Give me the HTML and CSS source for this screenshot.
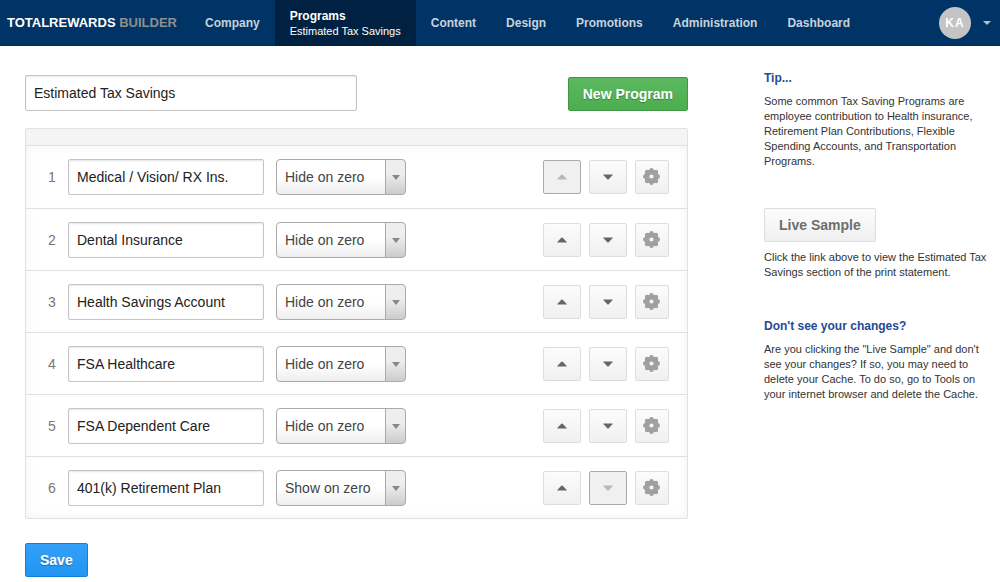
FILE: index.html
```html
<!DOCTYPE html>
<html lang="en">
<head>
<meta charset="utf-8">
<title>TotalRewards Builder - Programs</title>
<link rel="stylesheet" href="styles.css">
</head>
<body>
<svg class="sprite" aria-hidden="true">
  <symbol id="gear" viewBox="0 0 17 17">
    <circle class="ring" cx="8.5" cy="8.5" r="4.6"/>
    <circle cx="8.5" cy="2.2" r="2.2"/><circle cx="8.5" cy="14.8" r="2.2"/>
    <circle cx="2.2" cy="8.5" r="2.2"/><circle cx="14.8" cy="8.5" r="2.2"/>
    <circle cx="4" cy="4" r="2.2"/><circle cx="13" cy="4" r="2.2"/>
    <circle cx="4" cy="13" r="2.2"/><circle cx="13" cy="13" r="2.2"/>
  </symbol>
  <symbol id="up" viewBox="0 0 10 6"><path d="M0.3 5.6V5L4.3 0.8Q5 0.2 5.7 0.8L9.7 5V5.6Z"/></symbol>
  <symbol id="down" viewBox="0 0 10 6"><path d="M0.3 0.4V1L4.3 5.2Q5 5.8 5.7 5.2L9.7 1V0.4Z"/></symbol>
</svg>

<header class="topbar">
  <a class="brand" href="#">TOTALREWARDS <span class="brand-sub">BUILDER</span></a>
  <nav class="nav">
    <a href="#">Company</a>
    <a class="active" href="#">Programs<span class="nav-sub">Estimated Tax Savings</span></a>
    <a href="#">Content</a>
    <a href="#">Design</a>
    <a href="#">Promotions</a>
    <a href="#">Administration</a>
    <a href="#">Dashboard</a>
  </nav>
  <button class="account" type="button" aria-label="Account"><span class="avatar">KA</span><span class="caret"></span></button>
</header>

<div class="page">
  <main class="main">
    <div class="toolbar">
      <input class="text title" type="text" aria-label="Program group" value="Estimated Tax Savings">
      <button class="btn green" type="button">New Program</button>
    </div>

    <div class="panel">
      <div class="panel-head"></div>
      <ol class="rows">
        <li class="row">
          <span class="num">1</span>
          <input class="text name" type="text" aria-label="Program 1" value="Medical / Vision/ RX Ins.">
          <span class="select"><select aria-label="Display 1"><option selected>Hide on zero</option><option>Show on zero</option></select></span>
          <span class="actions">
            <button class="btn move" type="button" aria-label="Move up" disabled><svg><use href="#up"/></svg></button>
            <button class="btn move" type="button" aria-label="Move down"><svg><use href="#down"/></svg></button>
            <button class="btn gear" type="button" aria-label="Settings"><svg><use href="#gear"/></svg></button>
          </span>
        </li>
        <li class="row">
          <span class="num">2</span>
          <input class="text name" type="text" aria-label="Program 2" value="Dental Insurance">
          <span class="select"><select aria-label="Display 2"><option selected>Hide on zero</option><option>Show on zero</option></select></span>
          <span class="actions">
            <button class="btn move" type="button" aria-label="Move up"><svg><use href="#up"/></svg></button>
            <button class="btn move" type="button" aria-label="Move down"><svg><use href="#down"/></svg></button>
            <button class="btn gear" type="button" aria-label="Settings"><svg><use href="#gear"/></svg></button>
          </span>
        </li>
        <li class="row">
          <span class="num">3</span>
          <input class="text name" type="text" aria-label="Program 3" value="Health Savings Account">
          <span class="select"><select aria-label="Display 3"><option selected>Hide on zero</option><option>Show on zero</option></select></span>
          <span class="actions">
            <button class="btn move" type="button" aria-label="Move up"><svg><use href="#up"/></svg></button>
            <button class="btn move" type="button" aria-label="Move down"><svg><use href="#down"/></svg></button>
            <button class="btn gear" type="button" aria-label="Settings"><svg><use href="#gear"/></svg></button>
          </span>
        </li>
        <li class="row">
          <span class="num">4</span>
          <input class="text name" type="text" aria-label="Program 4" value="FSA Healthcare">
          <span class="select"><select aria-label="Display 4"><option selected>Hide on zero</option><option>Show on zero</option></select></span>
          <span class="actions">
            <button class="btn move" type="button" aria-label="Move up"><svg><use href="#up"/></svg></button>
            <button class="btn move" type="button" aria-label="Move down"><svg><use href="#down"/></svg></button>
            <button class="btn gear" type="button" aria-label="Settings"><svg><use href="#gear"/></svg></button>
          </span>
        </li>
        <li class="row">
          <span class="num">5</span>
          <input class="text name" type="text" aria-label="Program 5" value="FSA Dependent Care">
          <span class="select"><select aria-label="Display 5"><option selected>Hide on zero</option><option>Show on zero</option></select></span>
          <span class="actions">
            <button class="btn move" type="button" aria-label="Move up"><svg><use href="#up"/></svg></button>
            <button class="btn move" type="button" aria-label="Move down"><svg><use href="#down"/></svg></button>
            <button class="btn gear" type="button" aria-label="Settings"><svg><use href="#gear"/></svg></button>
          </span>
        </li>
        <li class="row">
          <span class="num">6</span>
          <input class="text name" type="text" aria-label="Program 6" value="401(k) Retirement Plan">
          <span class="select"><select aria-label="Display 6"><option>Hide on zero</option><option selected>Show on zero</option></select></span>
          <span class="actions">
            <button class="btn move" type="button" aria-label="Move up"><svg><use href="#up"/></svg></button>
            <button class="btn move" type="button" aria-label="Move down" disabled><svg><use href="#down"/></svg></button>
            <button class="btn gear" type="button" aria-label="Settings"><svg><use href="#gear"/></svg></button>
          </span>
        </li>
      </ol>
    </div>

    <button class="btn blue" type="button">Save</button>
  </main>

  <aside class="side">
    <section>
      <h2>Tip...</h2>
      <p>Some common Tax Saving Programs are employee contribution to Health insurance, Retirement Plan Contributions, Flexible Spending Accounts, and Transportation Programs.</p>
    </section>
    <section>
      <a class="btn" href="#">Live Sample</a>
      <p>Click the link above to view the Estimated Tax Savings section of the print statement.</p>
    </section>
    <section>
      <h2>Don't see your changes?</h2>
      <p>Are you clicking the "Live Sample" and don't see your changes? If so, you may need to delete your Cache. To do so, go to Tools on your internet browser and delete the Cache.</p>
    </section>
  </aside>
</div>
</body>
</html>
```
FILE: styles.css
```css
* { box-sizing: border-box; }

body {
  margin: 0;
  background: #fff;
  color: #333;
  font: 14px/20px "Liberation Sans", Arial, sans-serif;
}

a { text-decoration: none; }
.sprite { display: none; }

.topbar {
  display: flex;
  align-items: stretch;
  height: 46px;
  padding: 0 9px 0 7px;
  background: #036;
  border-bottom: 1px solid #002c59;
}

.brand {
  align-self: center;
  margin-right: 13px;
  color: #fff;
  font-size: 13px;
  font-weight: bold;
  white-space: nowrap;
}

.brand-sub { color: #8f8f8f; }

.nav { display: flex; }

.nav a {
  display: flex;
  flex-direction: column;
  justify-content: center;
  margin-bottom: -1px;
  padding: 0 15px;
  color: #c8d2dc;
  font-size: 12px;
  font-weight: bold;
  line-height: 15px;
  white-space: nowrap;
}

.nav .active { padding-top: 1px; background: #002142; color: #fff; }
.nav-sub { font-size: 11px; font-weight: normal; }

.account {
  display: flex;
  align-items: center;
  gap: 12px;
  margin-left: auto;
  padding: 0;
  border: 0;
  background: none;
  cursor: pointer;
}

.avatar {
  width: 32px;
  height: 32px;
  border-radius: 50%;
  background: #c4c4c4;
  color: #fff;
  font: bold 12px/32px "Liberation Sans", Arial, sans-serif;
  letter-spacing: 1px;
  text-align: center;
}

.caret {
  border: 4px solid transparent;
  border-top-color: #b3c2d1;
  border-bottom: 0;
}

.page {
  display: flex;
  justify-content: space-between;
  gap: 76px;
  padding: 25px 12px 5px 25px;
}

.main { flex: 1; padding-top: 4px; }
.side { flex: 0 0 224px; }

.toolbar {
  display: flex;
  justify-content: space-between;
  align-items: flex-end;
  margin-bottom: 17px;
}

.text {
  height: 36px;
  padding: 0 8px;
  border: 1px solid #c5c5c5;
  border-radius: 2px;
  background: #fff;
  box-shadow: inset 0 1px 2px rgba(0, 0, 0, 0.1);
  color: #222;
  font: 14px/20px "Liberation Sans", Arial, sans-serif;
}

.title { width: 50%; }
.name { width: 196px; }

.btn {
  display: inline-flex;
  align-items: center;
  justify-content: center;
  height: 34px;
  padding: 0 14px;
  border: 1px solid #ddd;
  border-radius: 2px;
  background: linear-gradient(#fcfcfc, #f0f0f0);
  color: #6e6e6e;
  font: bold 14px/20px "Liberation Sans", Arial, sans-serif;
  cursor: pointer;
}

.green {
  border-color: #409843;
  background: linear-gradient(#5cb860, #4cae50);
  color: #fff;
  text-shadow: 0 1px 1px rgba(0, 0, 0, 0.3);
}

.blue {
  border-color: #0f80dc;
  background: linear-gradient(#349ff7, #2196f3);
  color: #fff;
  text-shadow: 0 1px 1px rgba(0, 0, 0, 0.3);
}

.panel {
  margin-bottom: 24px;
  border: 1px solid #e1e1e1;
  border-radius: 2px;
}

.panel-head {
  height: 17px;
  border-bottom: 1px solid #e1e1e1;
  background: #f4f4f4;
}

.rows {
  margin: 0;
  padding: 0;
  list-style: none;
  box-shadow: inset 0 0 12px rgba(0, 0, 0, 0.05);
}

.row {
  display: flex;
  align-items: center;
  gap: 12px;
  padding: 13px 18px 12px 22px;
  border-bottom: 1px solid #e1e1e1;
}

.row:first-child { padding-bottom: 13px; }
.row:last-child { border-bottom: 0; }

.num { width: 8px; color: #777; }

.select { position: relative; }

.select select {
  display: block;
  width: 130px;
  height: 36px;
  padding: 0 28px 0 8px;
  border: 1px solid #aaa;
  border-radius: 4px;
  appearance: none;
  background:
    linear-gradient(#aaa, #aaa) right 19px top / 1px 100% no-repeat,
    linear-gradient(#eee 40%, #ccc) right / 19px 100% no-repeat,
    linear-gradient(#fff 50%, #eee);
  color: #444;
  font: 14px/20px "Liberation Sans", Arial, sans-serif;
}

.select::after {
  content: "";
  position: absolute;
  top: 16px;
  right: 6px;
  border: 4px solid transparent;
  border-top: 5px solid #888;
  border-bottom: 0;
  pointer-events: none;
}

.actions {
  display: flex;
  gap: 8px;
  margin-left: auto;
}

.move { width: 38px; padding: 0; }
.move svg { width: 10px; height: 6px; fill: #666; }
.move:disabled { border-color: #aaa; background: #f0f0f0; cursor: default; }
.move:disabled svg { fill: #b8b8b8; }
.gear { width: 34px; padding: 0 1px 1px 0; }
.gear svg { width: 17px; height: 17px; fill: #a0a0a0; }
.ring { fill: none; stroke: #a0a0a0; stroke-width: 5px; }

.side section { margin-bottom: 39px; }

.side h2 {
  margin: 0 0 8px;
  color: #264a96;
  font-size: 12px;
  line-height: 15px;
}

.side p {
  margin: 0;
  font-size: 11px;
  line-height: 15px;
}

.side .btn { margin-bottom: 8px; }
```
